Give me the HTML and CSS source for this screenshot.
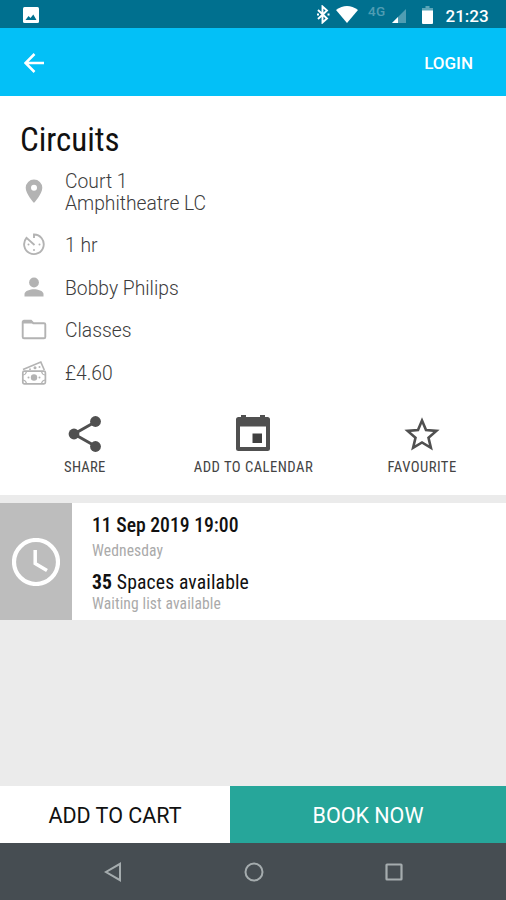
FILE: index.html
```html
<!DOCTYPE html>
<html lang="en">
<head>
<meta charset="utf-8">
<title>Circuits</title>
<link rel="stylesheet" href="styles.css">
</head>
<body>
<div class="screen">
  <div class="status">
    <svg class="st-image" width="16" height="16" viewBox="0 0 16 16"><rect width="16" height="16" rx="1.500" fill="#fff"/><path d="M2.500 13l3-4 2 2 2.800-3.500L13.500 13z" fill="#00708f"/></svg>
    <svg class="st-bt" width="14" height="19" viewBox="0 0 14 19"><path d="M2 5l9 8.500-4.500 4V1.500L11 5.500 2 14" fill="none" stroke="#fff" stroke-width="1.900"/><path d="M1 8.500h2v2H1zM11.500 8.500h2v2h-2z" fill="#fff"/></svg>
    <svg class="st-wifi" width="22" height="17" viewBox="0 0 22 17"><path d="M0 4Q11-4 22 4L11 17z" fill="#fff"/></svg>
    <span class="st-net">4G</span>
    <svg class="st-signal" width="14" height="14" viewBox="0 0 14 14"><path d="M14 0v14H0z" fill="#4f9db3"/><path d="M6 8v6H0z" fill="#fff"/></svg>
    <svg class="st-battery" width="11" height="18" viewBox="0 0 11 18"><path d="M3.500 0h4v2H11v3H0V2h3.500z" fill="#5ba5b8"/><path d="M0 4.500h11V17a1 1 0 0 1-1 1H1a1 1 0 0 1-1-1z" fill="#fff"/></svg>
    <span class="st-time">21:23</span>
  </div>
  <header class="bar">
    <svg width="20" height="20" viewBox="0 0 20 20"><path d="M20 10H2M10.500 1L1.500 10l9 9" fill="none" stroke="#fff" stroke-width="2.500"/></svg>
    <span class="login">LOGIN</span>
  </header>
  <main class="details">
    <h1 class="title">Circuits</h1>
    <div class="row row-tall"><svg class="icon" width="28" height="28" viewBox="0 0 28 28"><path fill-rule="evenodd" d="M14 2.500a8.300 8.300 0 0 0-8.300 8.300C5.700 17 14 26 14 26s8.300-9 8.300-15.200A8.300 8.300 0 0 0 14 2.500zm0 5.300a3 3 0 1 1 0 6 3 3 0 0 1 0-6z" fill="#b3b3b3"/></svg><span class="label label-tall">Court 1<br>Amphitheatre LC</span></div>
    <div class="row"><svg class="icon" width="28" height="28" viewBox="0 0 28 28"><path d="M14 7V3.500a9.800 9.800 0 1 1-7.500 3.400L14.500 14" fill="none" stroke="#b3b3b3" stroke-width="1.900"/><g fill="#b3b3b3"><circle cx="14" cy="19" r="1"/><circle cx="8.500" cy="13.500" r="1"/><circle cx="19.500" cy="13.500" r="1"/></g></svg><span class="label">1 hr</span></div>
    <div class="row"><svg class="icon" width="28" height="28" viewBox="0 0 28 28"><circle cx="14" cy="8.500" r="4.900" fill="#b3b3b3"/><path d="M4.500 22.500V20c0-3.200 6-4.800 9.500-4.800s9.500 1.600 9.500 4.800v2.500z" fill="#b3b3b3"/></svg><span class="label">Bobby Philips</span></div>
    <div class="row row-folder"><svg class="icon" width="28" height="28" viewBox="0 0 28 28"><path d="M4 4.700h7l2.300 2.500H24A1.300 1.300 0 0 1 25.300 8.500V21a1.300 1.300 0 0 1-1.300 1.300H4A1.300 1.300 0 0 1 2.700 21V6A1.300 1.300 0 0 1 4 4.700z" fill="none" stroke="#b3b3b3" stroke-width="1.900"/><path d="M3 4.500h8l2 3H3z" fill="#b3b3b3"/></svg><span class="label">Classes</span></div>
    <div class="row"><svg class="icon" width="28" height="28" viewBox="0 0 28 28"><g fill="none" stroke="#b3b3b3" stroke-width="1.700"><path d="M3 10.500L20.800 3l3.500 8"/><rect x="2.800" y="12.200" width="22.600" height="12.600" rx="1.500"/><path d="M3 16q3-.500 3.500-3.500M25 16q-3-.500-3.500-3.500M3 21q3 .500 3.500 3.500M25 21q-3 .500-3.500 3.500" stroke-width="1.200"/></g><g fill="#b3b3b3"><circle cx="14" cy="18.500" r="3.200"/><circle cx="8.500" cy="18.500" r="1"/><circle cx="19.500" cy="18.500" r="1"/><circle cx="15" cy="8.800" r="1.500"/><circle cx="19.500" cy="8" r="1"/><circle cx="10" cy="10.200" r=".9"/></g></svg><span class="label">£4.60</span></div>
    <div class="actions">
      <div class="action"><svg width="36" height="38" viewBox="0 0 36 38"><path d="M29 6.500L7 19l22 12.500" fill="none" stroke="#505050" stroke-width="3"/><g fill="#505050"><circle cx="28.500" cy="6.500" r="5.400"/><circle cx="7" cy="19" r="5.400"/><circle cx="28.500" cy="31.500" r="5.400"/></g></svg><span class="caption cap-share">SHARE</span></div>
      <div class="action"><svg width="36" height="38" viewBox="0 0 36 38"><path fill-rule="evenodd" d="M6 0h5v2h14V0h5v2h2.500A2.500 2.500 0 0 1 35 4.500v29a2.500 2.500 0 0 1-2.500 2.500h-29A2.500 2.500 0 0 1 1 33.500v-29A2.500 2.500 0 0 1 3.500 2H6zM5 11.500V32h26V11.500z" fill="#505050"/><path d="M17.500 18.500h9.500V28h-9.500z" fill="#404040"/></svg><span class="caption cap-cal">ADD TO CALENDAR</span></div>
      <div class="action"><svg width="36" height="38" viewBox="0 0 36 38"><path d="M18 5.500l4 9.500 10.400.900-7.900 6.800 2.400 10.200L18 27.500l-8.900 5.400 2.400-10.200-7.900-6.800L14 15z" fill="none" stroke="#505050" stroke-width="2.600"/></svg><span class="caption cap-fav">FAVOURITE</span></div>
    </div>
  </main>
  <section class="card">
    <div class="clock"><svg width="48" height="48" viewBox="0 0 48 48"><circle cx="24" cy="24" r="22" fill="none" stroke="#fff" stroke-width="4.200"/><path d="M23.200 12v13.500L35 32.500" fill="none" stroke="#fff" stroke-width="3.500"/></svg></div>
    <div class="info">
      <span class="strong s-date">11 Sep 2019 19:00</span>
      <span class="sub s-day">Wednesday</span>
      <span class="strong s-space"><b>35</b> Spaces available</span>
      <span class="sub s-wait">Waiting list available</span>
    </div>
  </section>
  <div class="spacer"></div>
  <footer class="buttons"><div class="cart"><span>ADD TO CART</span></div><div class="book"><span>BOOK NOW</span></div></footer>
  <nav class="nav">
    <svg width="20" height="20" viewBox="0 0 20 20"><path d="M17 1.800v16.400L3 10z" fill="none" stroke="#a5acae" stroke-width="2"/></svg>
    <svg width="20" height="20" viewBox="0 0 20 20"><circle cx="10" cy="10" r="8.500" fill="none" stroke="#a5acae" stroke-width="2"/></svg>
    <svg width="20" height="20" viewBox="0 0 20 20"><rect x="2.500" y="2.500" width="15" height="15" rx=".5" fill="none" stroke="#a5acae" stroke-width="2.200"/></svg>
  </nav>
</div>
</body>
</html>
```
FILE: styles.css
```css
* { box-sizing: border-box; }
body { margin: 0; font-family: Roboto, sans-serif; }
svg { display: block; flex: none; }
span { white-space: nowrap; }
.screen { width: 506px; height: 900px; display: flex; flex-direction: column; background: #ebebeb; overflow: hidden; }
.status { height: 28px; background: #00708f; display: flex; align-items: flex-start; padding-left: 23px; color: #fff; flex: none; }
.st-image { margin-top: 7px; }
.st-bt { margin: 5px 0 0 277px; }
.st-wifi { margin: 6px 0 0 6px; }
.st-net { margin: 4px 0 0 10px; width: 19px; font-size: 13.5px; line-height: 15px; font-weight: 500; color: #4f9db3; letter-spacing: .3px; }
.st-signal { margin: 9px 0 0 5px; }
.st-battery { margin: 6px 0 0 16px; }
.st-time { margin: 5px 0 0 12.5px; font-size: 17px; line-height: 22px; font-weight: 500; }
.bar { height: 68px; background: #03c0f7; display: flex; align-items: center; justify-content: space-between; padding: 1px 33px 0 24px; flex: none; }
.login { color: #fff; font-size: 17px; font-weight: 500; }
.details { height: 399px; background: #fff; padding: 25px 0 0 20px; flex: none; }
.title { margin: 0 0 10px; height: 38px; line-height: 38px; font-size: 33px; font-weight: 400; font-family: "Roboto Condensed", Roboto, sans-serif; font-stretch: 75%; color: #111; }
.row { height: 43px; display: flex; align-items: center; }
.row-tall { height: 54px; padding-bottom: 10px; }
.row-folder { height: 42px; }
.icon { margin-right: 17px; }
.label { font-size: 19.3px; line-height: 22px; font-weight: 300; color: #3c3c3c; padding-top: 2px; }
.label-tall { padding-top: 4px; }
.actions { display: flex; margin: 21px 0 0 -20px; padding: 0; }
.action { width: 168.67px; display: flex; flex-direction: column; align-items: center; gap: 6px; }
.action:first-child { padding-left: 1px; }
.action:nth-child(n+2) { padding-left: 1px; }
.caption, .strong, .sub { font-family: "Roboto Condensed", Roboto, sans-serif; font-stretch: 75%; }
.caption { font-size: 14.7px; line-height: 17px; color: #444; letter-spacing: .45px; }
.cap-share { letter-spacing: .2px; }
.card { margin-top: 8px; height: 117px; display: flex; background: #fff; flex: none; }
.clock { width: 72px; background: #bdbdbd; display: flex; align-items: center; justify-content: center; }
.info { padding: 11px 0 0 20px; display: flex; flex-direction: column; align-items: flex-start; }
.strong { font-size: 19.7px; line-height: 24px; font-weight: 500; color: #111; }
.strong b { font-weight: 700; }
.sub { font-size: 15.6px; line-height: 20px; color: #aaa; letter-spacing: .1px; }
.s-day { margin: 3px 0 10px; }
.s-space { font-weight: 400; letter-spacing: .13px; }
.s-wait { margin-top: -1px; }
.spacer { flex: 1; }
.buttons { height: 57px; display: flex; flex: none; font-size: 21.5px; line-height: 24px; }
.cart, .book { display: flex; align-items: center; justify-content: center; padding-top: 2px; }
.cart { width: 230px; background: #fff; color: #111; }
.book { flex: 1; background: #26a69a; color: #fff; }
.nav { height: 57px; background: #464d52; display: flex; align-items: center; justify-content: space-between; padding: 0 102px 0 103px; flex: none; }
```
